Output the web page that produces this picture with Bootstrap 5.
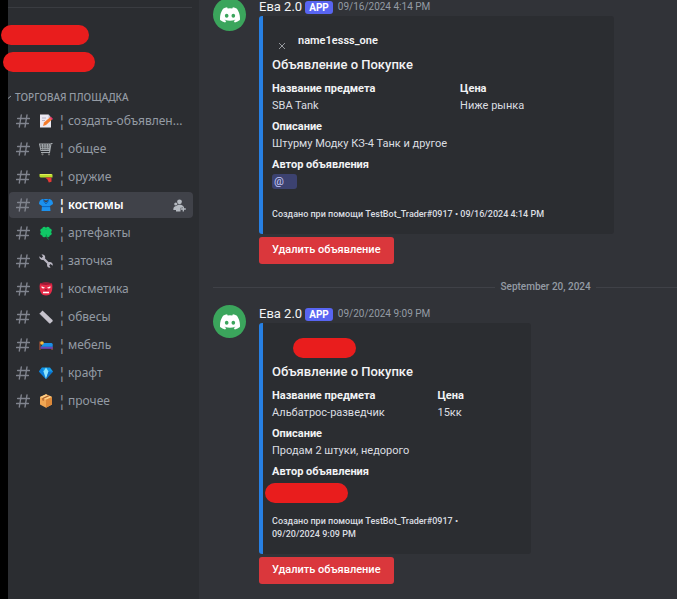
<!DOCTYPE html>
<html lang="ru">
<head>
<meta charset="utf-8">
<meta name="viewport" content="width=device-width, initial-scale=1">
<title>Торговая площадка</title>
<link href="https://cdn.jsdelivr.net/npm/bootstrap@5.3.0/dist/css/bootstrap.min.css" rel="stylesheet">
<style>
body{background:#313338;color:#dbdee1;font-family:Roboto,"Noto Sans",sans-serif;font-size:12px;line-height:16px}
.sidebar{width:199px;border-left:8px solid #000;background:#2b2d31;color:#8b8f98;font-family:"Noto Sans","Open Sans",sans-serif}
.side-top{height:8px;border-bottom:1px solid #3a3c41;margin-right:7px}
.redact{background:#e91d1d;border-radius:10px;height:20px}
.redact-a{width:88px;margin:17px 0 7px -7px}
.redact-b{width:92px;margin-left:-5px}
.category{font-size:10px;font-weight:500;margin-top:17px;gap:2px;color:#949ba4}
.channels{margin:3px 6px 0 1px;gap:2px}
.channel{height:26px;padding:0 7px;border-radius:4px;color:#949ba4;font-size:12px;text-decoration:none;white-space:nowrap}
.channel:hover{color:#dbdee1}
.channel .hash{width:14px;height:14px;margin-right:9px}
.channel .emo{width:14px;height:14px;margin-right:5px}
.channel .bar{width:10px;font-size:14px}
.channel.active{background:#404249;color:#fff;font-weight:600}
.feed{padding-left:14px}
.avatar{width:33px;height:33px;border-radius:50%;background:#3ba55c}
.message{gap:13px}
.message-1{margin-top:-2px}
.msg-head{height:18px;gap:3px;white-space:nowrap}
.author-name{font-size:13px;color:#f2f3f5}
.app-tag{background:#5865f2;color:#fff;font-size:10px;font-weight:700;line-height:13px;border-radius:3px;padding:0 4px}
.stamp{font-size:10px;color:#949ba4;margin-left:2px}
.embed{border-left:4px solid #2780e3;border-radius:3px;background:#2b2d31;padding:14px 12px 13px 9px;width:100%}
.embed-wide{max-width:355px;--first:57%}
.embed-slim{max-width:272px;--first:67%}
.embed-author{height:22px;font-size:11px;font-weight:600;color:#f2f3f5;gap:12px;padding-left:5px}
.redact-c{width:63px;margin-left:16px}
.embed-title{font-size:13px;line-height:20px;font-weight:500;color:#f2f3f5;margin:3px 0 6px}
.fields{display:grid;grid-template-columns:var(--first) 1fr;row-gap:5px;margin:0}
.fields .wide{grid-column:1/-1}
.fields dt{font-size:11px;font-weight:700;color:#f2f3f5;line-height:16px}
.fields dd{font-size:11px;line-height:17px;min-height:17px;margin:0}
.mention{display:inline-block;background:#3c4270;color:#c9cdfb;border-radius:3px;width:25px;line-height:15px;padding:0 2px;text-decoration:none}
.redact-d{width:83px;margin:3px 0 -6px -7px;box-shadow:0 -1px 0 -1px #3c4270}
.embed-foot{font-size:9px;font-weight:500;line-height:13px;margin-top:18px}
.btn-remove{background:#da373c;color:#fff;border:0;border-radius:3px;font-size:11px;font-weight:500;line-height:16px;padding:5px 13px 6px;margin-top:3px}
.btn-remove:hover{background:#a12828;color:#fff}
.day{margin:15px 0 10px;gap:5px;font-size:10px;font-weight:500;line-height:16px;color:#949ba4}
.day::before,.day::after{content:"";height:1px;background:#3f4147}
.day::before{flex:285 1 0}
.day::after{flex:82 1 0}
</style>
<script src="https://cdn.jsdelivr.net/npm/bootstrap@5.3.0/dist/js/bootstrap.bundle.min.js"></script>
</head>
<body>
<svg class="d-none" aria-hidden="true">
<symbol id="hash" viewBox="0 0 14 14"><path d="M5.3 1 3.3 13M11 1 9 13M1.6 4.5h11.8M.6 9.5h11.8" fill="none" stroke="#80848e" stroke-width="1.4" stroke-linecap="round"/></symbol>
<symbol id="discord" viewBox="0 0 16 16"><path fill="#fff" d="M13.545 2.907a13.2 13.2 0 0 0-3.257-1.011.05.05 0 0 0-.052.025c-.141.25-.297.577-.406.833a12.2 12.2 0 0 0-3.658 0 8 8 0 0 0-.412-.833.05.05 0 0 0-.052-.025c-1.125.194-2.22.534-3.257 1.011a.04.04 0 0 0-.021.018C.356 6.024-.213 9.047.066 12.032q.003.022.021.037a13.3 13.3 0 0 0 3.995 2.02.05.05 0 0 0 .056-.019q.463-.63.818-1.329a.05.05 0 0 0-.01-.059l-.018-.011a9 9 0 0 1-1.248-.595.05.05 0 0 1-.02-.066l.015-.019q.127-.095.248-.195a.05.05 0 0 1 .051-.007c2.619 1.196 5.454 1.196 8.041 0a.05.05 0 0 1 .053.007q.121.1.248.195a.05.05 0 0 1-.004.085 8 8 0 0 1-1.249.594.05.05 0 0 0-.03.03.05.05 0 0 0 .003.041c.24.465.515.909.817 1.329a.05.05 0 0 0 .056.019 13.2 13.2 0 0 0 4.001-2.02.05.05 0 0 0 .021-.037c.334-3.451-.559-6.449-2.366-9.106a.03.03 0 0 0-.02-.019m-8.198 7.307c-.789 0-1.438-.724-1.438-1.612s.637-1.613 1.438-1.613c.807 0 1.45.73 1.438 1.613 0 .888-.637 1.612-1.438 1.612m5.316 0c-.788 0-1.438-.724-1.438-1.612s.637-1.613 1.438-1.613c.807 0 1.451.73 1.438 1.613 0 .888-.631 1.612-1.438 1.612"/></symbol>
</svg>
<div class="d-flex min-vh-100">
<aside class="sidebar flex-shrink-0">
<div class="side-top"></div>
<div class="redact redact-a"></div>
<div class="redact redact-b"></div>
<div class="category d-flex align-items-center"><svg width="5" height="8" viewBox="0 0 5 8" aria-hidden="true"><path d="M0 5.500 3 3" stroke="#949ba4" fill="none"/></svg><span>ТОРГОВАЯ ПЛОЩАДКА</span></div>
<nav class="channels d-flex flex-column" aria-label="Каналы">
<a class="channel d-flex align-items-center" href="#"><svg class="hash"><use href="#hash"/></svg><svg class="emo" viewBox="0 0 14 14"><path d="M1 .5h8.500L12 3.500v10H1z" fill="#ece9f2"/><path d="M9.500.5V4H12" fill="#c4bfd0"/><path d="M3 4h4M3 6.500h3" stroke="#b7b1c4"/><path d="m4 12 1-3.500 5.500-4.700 2 2.300L7 11z" fill="#f47b2b"/><path d="m10.500 3.800 1.500-1 2 2.200-1.500 1.200z" fill="#ee3d6a"/></svg><span class="bar">¦</span><span>создать-объявлен...</span></a>
<a class="channel d-flex align-items-center" href="#"><svg class="hash"><use href="#hash"/></svg><svg class="emo" viewBox="0 0 14 14"><path d="M.5 2h10l-.7 6.500H2zM3.400 2l.6 6.500M6 2v6.500M8.500 2 8 8.500M1 4h9.500M1.400 6.200H10M13.500 1.500H12l-1.500 9H2" fill="none" stroke="#a5aaae" stroke-width="1.100"/><circle cx="3.500" cy="12.300" r="1.100" fill="#777"/><circle cx="10" cy="12.300" r="1.100" fill="#777"/></svg><span class="bar">¦</span><span>общее</span></a>
<a class="channel d-flex align-items-center" href="#"><svg class="hash"><use href="#hash"/></svg><svg class="emo" viewBox="0 0 14 14"><path d="M.5 4h12q1 0 1 1v2.500H1.500L.5 6.500z" fill="#b8dc2c"/><path d="M1 4h11.500v1H1z" fill="#e0ed58"/><path d="M6 7.500h6.500v4.300l-2.700.6-1.300-3z" fill="#e43a36"/></svg><span class="bar">¦</span><span>оружие</span></a>
<a class="channel active d-flex align-items-center" href="#" aria-current="page"><svg class="hash"><use href="#hash"/></svg><svg class="emo" viewBox="0 0 14 14"><path d="M3.500 1h7Q14 2 14 6l-3 2 .5 5h-9L3 8 0 6Q0 2 3.500 1z" fill="#1c91ee"/><path d="M4.800 1.300Q7 3.800 9.200 1.300L8.700 3.500 7 4.500 5.300 3.500z" fill="#404249"/><path d="M4.300 1.200Q4.500 4 7 6q2.500-2 2.700-4.800M3 8.600h8" fill="none" stroke="#0b64c0"/></svg><span class="bar">¦</span><span class="flex-grow-1">костюмы</span><svg width="13" height="13" viewBox="0 0 13 13" fill="#b5bac1" role="img" aria-label="Пригласить"><circle cx="6.500" cy="2.800" r="2.400"/><circle cx="2.800" cy="5" r="1.600"/><path d="M.3 11C.3 8 1.500 7 3.500 7L5 5.800h3q2 .4 2.200 1.700l-1 1.200H7.500v3.800H3V11z"/><path d="M10.300 7.500v5M7.800 10h5" stroke="#b5bac1" stroke-width="1.300"/></svg></a>
<a class="channel d-flex align-items-center" href="#"><svg class="hash"><use href="#hash"/></svg><svg class="emo" viewBox="0 0 14 14"><g fill="#10c866"><circle cx="5.200" cy="2.600" r="1.900"/><circle cx="8.800" cy="2.600" r="1.900"/><circle cx="5.200" cy="9.400" r="1.900"/><circle cx="8.800" cy="9.400" r="1.900"/><circle cx="3.200" cy="4.500" r="1.900"/><circle cx="10.800" cy="4.500" r="1.900"/><circle cx="3.200" cy="7.600" r="1.900"/><circle cx="10.800" cy="7.600" r="1.900"/><path d="M4 3.500h6v5.500H4z"/></g><path d="m7.200 8.500.8 3 1.500 2" fill="none" stroke="#089b4a"/></svg><span class="bar">¦</span><span>артефакты</span></a>
<a class="channel d-flex align-items-center" href="#"><svg class="hash"><use href="#hash"/></svg><svg class="emo" viewBox="0 0 14 14"><path d="m4 4 6.500 6.500" stroke="#b9b6c2" stroke-width="2.300"/><path d="M2.500.3Q6.500.3 6.200 4L4.500 6Q.5 6.500.2 2.300L2.500 4 4 2.500zM11.500 13.700q-3.700.2-3.500-3.500L10 8q4-.3 3.800 3.700L11.500 10 10.200 11.300z" fill="#b9b6c2"/></svg><span class="bar">¦</span><span>заточка</span></a>
<a class="channel d-flex align-items-center" href="#"><svg class="hash"><use href="#hash"/></svg><svg class="emo" viewBox="0 0 14 14"><path d="M1 1.500Q7-.5 13 1.500 14 6 12.500 10 11 13.500 7 13.500T1.500 10Q0 6 1 1.500z" fill="#e62b48"/><path d="M1 1.500Q7-.5 13 1.500v.7L7 3 1 2.200z" fill="#9d1836"/><path d="m2.500 4.200 3.500 1.500q-1.500 1.300-3.300.3zM11.500 4.200 8 5.700q1.500 1.300 3.300.3zM4 9.800h6v1.400H4z" fill="#fff"/><path d="m6 7-.5 1.700h3L8 7z" fill="#ad1738"/></svg><span class="bar">¦</span><span>косметика</span></a>
<a class="channel d-flex align-items-center" href="#"><svg class="hash"><use href="#hash"/></svg><svg class="emo" viewBox="0 0 14 14"><path d="M3.500.5 13.500 10q.5.700 0 1.200l-2 2q-.6.500-1.200 0L.5 3.700z" fill="#c6c3cc"/><path d="m.5 3.700 9.800 9.500" stroke="#8c8993" stroke-width=".8"/></svg><span class="bar">¦</span><span>обвесы</span></a>
<a class="channel d-flex align-items-center" href="#"><svg class="hash"><use href="#hash"/></svg><svg class="emo" viewBox="0 0 14 14"><path d="M.3 3.500h1.300v8.500H.3zM12.400 9h1.300v3h-1.300z" fill="#9a4d37"/><path d="M1.500 8.500h12.200v2.300H1.500z" fill="#6b47b8"/><path d="M4.500 5h8q1.200 0 1.200 1.500v2.300H2z" fill="#1c8fe8"/><circle cx="3" cy="5" r="1.800" fill="#f8bd3b"/></svg><span class="bar">¦</span><span>мебель</span></a>
<a class="channel d-flex align-items-center" href="#"><svg class="hash"><use href="#hash"/></svg><svg class="emo" viewBox="0 0 14 14"><path d="M3 1.500h8L14 5.500 7 13 0 5.500z" fill="#129bea"/><path d="M3 1.500 4.500 5.500 7 13 0 5.500z" fill="#0c7edb"/><path d="M4.500 5.500 7 1.500l2.500 4L7 13z" fill="#8de4fc"/><path d="M9.500 5.500H14L7 13z" fill="#0a70cd"/></svg><span class="bar">¦</span><span>крафт</span></a>
<a class="channel d-flex align-items-center" href="#"><svg class="hash"><use href="#hash"/></svg><svg class="emo" viewBox="0 0 14 14"><path d="M7 .2 13 3v7.500L7 13.800 1 10.500V3z" fill="#f0a653"/><path d="M7 .2 13 3 7 5.800 1 3z" fill="#ffcf85"/><path d="M7 5.800 13 3v7.500L7 13.800z" fill="#dc8839"/><path d="m9.300 1.300-6 2.800v2.200l1.400.7V4.800l6-2.800z" fill="#ad612b"/></svg><span class="bar">¦</span><span>прочее</span></a>
</nav>
</aside>
<main class="feed flex-grow-1">
<article class="message message-1 d-flex align-items-start">
<div class="avatar d-flex align-items-center justify-content-center flex-shrink-0"><svg width="20" height="20"><use href="#discord"/></svg></div>
<div class="flex-grow-1">
<div class="msg-head d-flex align-items-center"><span class="author-name">Ева 2.0</span><span class="app-tag">APP</span><time class="stamp">09/16/2024 4:14 PM</time></div>
<section class="embed embed-wide">
<div class="embed-author d-flex align-items-center"><svg class="align-self-end" width="9" height="12" viewBox="0 0 9 12" aria-hidden="true"><path d="m2 3 6 6M8 3 2 9" stroke="#96999e" fill="none"/></svg><span>name1esss_one</span></div>
<h2 class="embed-title">Объявление о Покупке</h2>
<dl class="fields">
<div><dt>Название предмета</dt><dd>SBA Tank</dd></div>
<div><dt>Цена</dt><dd>Ниже рынка</dd></div>
<div class="wide"><dt>Описание</dt><dd>Штурму Модку КЗ-4 Танк и другое</dd></div>
<div class="wide"><dt>Автор объявления</dt><dd><a class="mention" href="#">@</a></dd></div>
</dl>
<div class="embed-foot">Создано при помощи TestBot_Trader#0917 • 09/16/2024 4:14 PM</div>
</section>
<button type="button" class="btn btn-remove">Удалить объявление</button>
</div>
</article>
<div class="day d-flex align-items-center"><span>September 20, 2024</span></div>
<article class="message d-flex align-items-start">
<div class="avatar d-flex align-items-center justify-content-center flex-shrink-0"><svg width="20" height="20"><use href="#discord"/></svg></div>
<div class="flex-grow-1">
<div class="msg-head d-flex align-items-center"><span class="author-name">Ева 2.0</span><span class="app-tag">APP</span><time class="stamp">09/20/2024 9:09 PM</time></div>
<section class="embed embed-slim">
<div class="embed-author d-flex align-items-center"><div class="redact redact-c"></div></div>
<h2 class="embed-title">Объявление о Покупке</h2>
<dl class="fields">
<div><dt>Название предмета</dt><dd>Альбатрос-разведчик</dd></div>
<div><dt>Цена</dt><dd>15кк</dd></div>
<div class="wide"><dt>Описание</dt><dd>Продам 2 штуки, недорого</dd></div>
<div class="wide"><dt>Автор объявления</dt><dd><div class="redact redact-d"></div></dd></div>
</dl>
<div class="embed-foot">Создано при помощи TestBot_Trader#0917 •<br>09/20/2024 9:09 PM</div>
</section>
<button type="button" class="btn btn-remove">Удалить объявление</button>
</div>
</article>
</main>
</div>
</body>
</html>
